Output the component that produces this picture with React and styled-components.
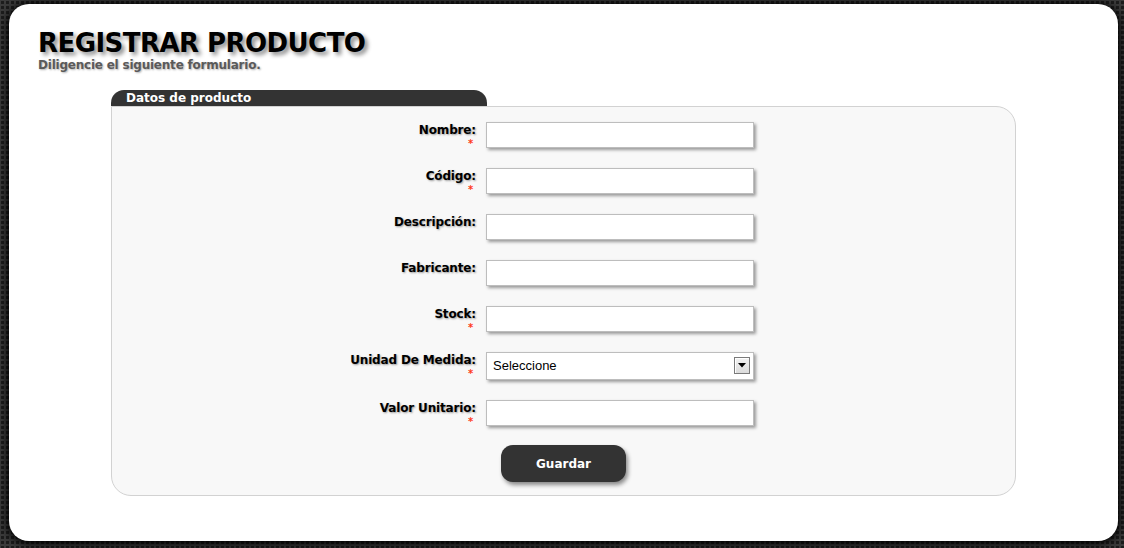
import React from 'react';
import styled, { createGlobalStyle } from 'styled-components';

const GlobalStyle = createGlobalStyle`
  html, body {
    margin: 0;
    padding: 0;
  }
  body {
    background-color: #3b3b3b;
    background-image: radial-gradient(circle, #1c1c1c 1.4px, transparent 1.8px);
    background-size: 5px 5px;
    font-family: "DejaVu Sans", Verdana, sans-serif;
  }
`;

const fields = [
  { label: 'Nombre:', required: true },
  { label: 'Código:', required: true },
  { label: 'Descripción:' },
  { label: 'Fabricante:' },
  { label: 'Stock:', required: true },
  { label: 'Unidad De Medida:', required: true, select: true },
  { label: 'Valor Unitario:', required: true },
];

export default function App() {
  return (
    <Page>
      <GlobalStyle />
      <Card>
        <Header>
          <Title>REGISTRAR PRODUCTO</Title>
          <Subtitle>Diligencie el siguiente formulario.</Subtitle>
        </Header>
        <Section>
          <Tab>Datos de producto</Tab>
          <Panel>
            <FormGrid>
              {fields.map((f) => (
                <Row key={f.label}>
                  <Label>
                    <span>{f.label}</span>
                    {f.required && <Required>*</Required>}
                  </Label>
                  {f.select ? (
                    <SelectWrap>
                      <Select defaultValue="">
                        <option value="">Seleccione</option>
                      </Select>
                      <ArrowBox>
                        <svg width="8" height="5" viewBox="0 0 8 5">
                          <path d="M0 0 H8 L4 4.5 Z" fill="#000" />
                        </svg>
                      </ArrowBox>
                    </SelectWrap>
                  ) : (
                    <Input type="text" />
                  )}
                </Row>
              ))}
            </FormGrid>
            <Actions>
              <Button type="button">Guardar</Button>
            </Actions>
          </Panel>
        </Section>
      </Card>
    </Page>
  );
}

const Page = styled.div`
  box-sizing: border-box;
  height: 100vh;
  padding: 4px 6px 7px 9px;
  display: flex;
`;

const Card = styled.div`
  flex: 1;
  background: #fff;
  border-radius: 20px;
  box-shadow: 0 1px 8px 2px #000;
  display: flex;
  flex-direction: column;
`;

const Header = styled.div`
  padding: 24px 0 0 29px;
`;

const Title = styled.h1`
  margin: 0;
  font-size: 26px;
  line-height: 30px;
  font-weight: bold;
  letter-spacing: -0.55px;
  color: #000;
  text-shadow: 3px 3px 4px #8a8a8a;
`;

const Subtitle = styled.div`
  font-size: 12px;
  line-height: 14px;
  font-weight: bold;
  letter-spacing: -0.22px;
  color: #5a5a5a;
  text-shadow: 1px 1px 2px #b0b0b0;
`;

const Section = styled.div`
  width: 905px;
  margin: 18px auto 0;
  display: flex;
  flex-direction: column;
`;

const Tab = styled.div`
  width: 361px;
  height: 16px;
  padding-left: 15px;
  background: #333;
  color: #fff;
  font-size: 12px;
  line-height: 17px;
  font-weight: bold;
  border-radius: 13px 13px 0 0;
`;

const Panel = styled.div`
  background: #f8f8f8;
  border: 1px solid #d2d2d2;
  border-radius: 0 20px 20px 20px;
  padding: 15px 0 13px;
`;

const FormGrid = styled.div`
  display: grid;
  grid-template-columns: 364px 270px;
  column-gap: 10px;
  row-gap: 20px;
`;

const Row = styled.div`
  display: contents;
`;

const Label = styled.label`
  display: flex;
  flex-direction: column;
  align-items: flex-end;
  padding-top: 1px;
  font-size: 12px;
  line-height: 14px;
  font-weight: bold;
  letter-spacing: -0.15px;
  color: #000;
  text-shadow: 1px 1px 2px #9a9a9a;
`;

const Required = styled.span`
  color: #ff3a1a;
  font-size: 10px;
  line-height: 8px;
  margin-right: 3px;
  margin-top: 3px;
  text-shadow: none;
`;

const Input = styled.input`
  box-sizing: border-box;
  width: 268px;
  height: 26px;
  border: 1px solid #bdbdbd;
  background: #fff;
  box-shadow: 2px 2px 3px #9a9a9a;
  outline: none;
  padding: 0 6px;
  font-family: "Liberation Sans", Arial, sans-serif;
  font-size: 13px;
`;

const SelectWrap = styled.div`
  position: relative;
  width: 268px;
  height: 28px;
`;

const Select = styled.select`
  appearance: none;
  box-sizing: border-box;
  width: 268px;
  height: 28px;
  border: 1px solid #bdbdbd;
  border-radius: 0;
  background: #fff;
  box-shadow: 2px 2px 3px #9a9a9a;
  outline: none;
  padding: 0 6px 2px;
  color: #000;
  font-family: "Liberation Sans", Arial, sans-serif;
  font-size: 13px;
`;

const ArrowBox = styled.span`
  position: absolute;
  top: 5px;
  right: 4px;
  box-sizing: border-box;
  width: 16px;
  height: 17px;
  border: 1px solid #7a7a7a;
  background: linear-gradient(#f2f2f2, #dcdcdc);
  box-shadow: inset 1px 1px 0 #fff;
  display: flex;
  align-items: center;
  justify-content: center;
  pointer-events: none;
`;

const Actions = styled.div`
  display: flex;
  justify-content: center;
  margin-top: 19px;
`;

const Button = styled.button`
  width: 125px;
  height: 37px;
  border: none;
  border-radius: 12px;
  background: #333;
  color: #fff;
  font-family: "DejaVu Sans", Verdana, sans-serif;
  font-size: 12px;
  font-weight: bold;
  box-shadow: 2px 3px 4px #8a8a8a;
  cursor: pointer;
`;
